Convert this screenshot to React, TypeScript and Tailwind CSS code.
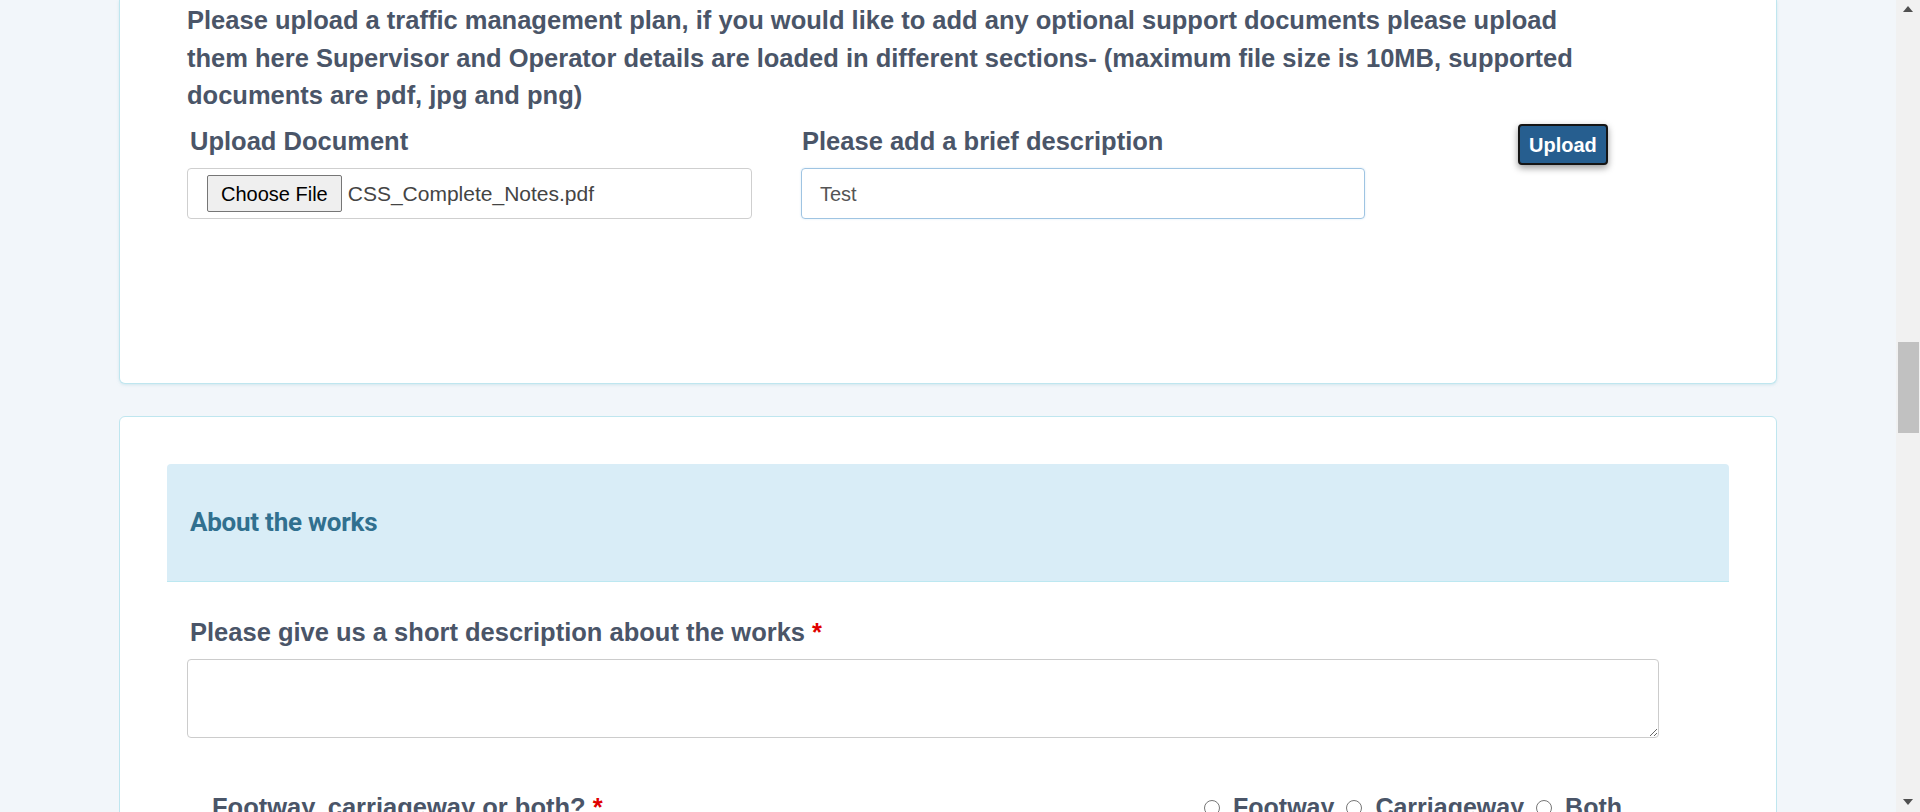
import React from "react";

function Radio({ label }: { label: string }) {
  return (
    <label className="flex items-center">
      <span className="w-[16px] h-[16px] rounded-full border border-[#767676] bg-white inline-block mr-[13px]" />
      <span className="font-bold mr-[12px] text-[25px]">{label}</span>
    </label>
  );
}

export default function App() {
  return (
    <div className="h-[812px] w-full overflow-hidden flex bg-[#f2f6fa] text-[#4a5568] font-['Liberation_Sans',Arial,sans-serif]">
      <main className="flex-1 flex flex-col items-center">
        {/* Card 1 */}
        <section className="w-[1658px] h-[384px] shrink-0 bg-white border border-t-0 border-[#bfe6ef] rounded-b-[6px] shadow-[0_1px_3px_rgba(150,200,215,0.35)] pl-[67px] pt-[2px]">
          <p className="w-[1400px] text-[25.5px] leading-[37.5px] font-bold">
            Please upload a traffic management plan, if you would like to add any optional support documents please upload them here Supervisor and Operator details are loaded in different sections- (maximum file size is 10MB, supported documents are pdf, jpg and png)
          </p>
          <div className="flex items-start mt-[8px]">
            <div className="w-[565px]">
              <div className="text-[25.5px] leading-[37.5px] font-bold pl-[3px]">Upload Document</div>
              <div className="mt-[8px] h-[51px] border border-[#cfcfcf] rounded-[4px] flex items-center pl-[19px]">
                <button className="h-[37px] px-[13px] border border-[#767676] rounded-[2px] bg-[#efefef] text-[20px] text-black leading-none">
                  Choose File
                </button>
                <span className="ml-[6px] text-[21px] text-[#444]">CSS_Complete_Notes.pdf</span>
              </div>
            </div>
            <div className="w-[564px] ml-[49px]">
              <div className="text-[25.5px] leading-[37.5px] font-bold pl-[1px]">Please add a brief description</div>
              <div className="mt-[8px] h-[51px] border border-[#9fc4e2] rounded-[4px] flex items-center pl-[18px] text-[20px] text-[#555] shadow-[0_0_2px_rgba(102,175,233,0.3)]">
                Test
              </div>
            </div>
            <button className="ml-[153px] mt-[1.5px] h-[41px] px-[9px] bg-[#265e8f] border-2 border-[#151515] rounded-[4px] text-white font-bold text-[20px] leading-none shadow-[0_3px_7px_rgba(0,0,0,0.4)]">
              Upload
            </button>
          </div>
        </section>

        {/* Card 2 */}
        <section className="w-[1658px] shrink-0 mt-[32px] bg-white border border-[#bfe6ef] rounded-[6px] pt-[47px] px-[47px] pb-[40px]">
          <div className="h-[118px] bg-[#d9edf7] border-b border-[#bce8f1] rounded-t-[4px] flex items-center pl-[23px]">
            <h2 className="font-['Roboto',Arial,sans-serif] font-bold text-[26px] tracking-[-0.25px] text-[#31708f]">
              About the works
            </h2>
          </div>
          <div className="pl-[20px]">
            <div className="mt-[32px] text-[25.5px] leading-[37.5px] font-bold pl-[3px]">
              Please give us a short description about the works <span className="text-[#e00000]">*</span>
            </div>
            <textarea className="mt-[7.5px] block w-[1472px] h-[79px] border border-[#cccccc] rounded-[4px] bg-white outline-none" />
            <div className="mt-[51px] flex items-center text-[25.5px] leading-[37.5px]">
              <div className="w-[1017px] pl-[25px] font-bold">
                Footway, carriageway or both? <span className="text-[#e00000]">*</span>
              </div>
              <Radio label="Footway" />
              <Radio label="Carriageway" />
              <Radio label="Both" />
            </div>
          </div>
        </section>
      </main>

      {/* Scrollbar */}
      <div className="w-[24px] shrink-0 h-full bg-[#f1f1f1] flex flex-col items-center">
        <div className="h-[17px] flex items-center justify-center">
          <span className="w-0 h-0 border-l-[5px] border-r-[5px] border-b-[6px] border-l-transparent border-r-transparent border-b-[#505050]" />
        </div>
        <div className="mt-[325px] w-[21px] h-[91px] bg-[#c1c1c1]" />
        <div className="flex-1" />
        <div className="h-[17px] mb-[2px] flex items-center justify-center">
          <span className="w-0 h-0 border-l-[5px] border-r-[5px] border-t-[6px] border-l-transparent border-r-transparent border-t-[#505050]" />
        </div>
      </div>
    </div>
  );
}
